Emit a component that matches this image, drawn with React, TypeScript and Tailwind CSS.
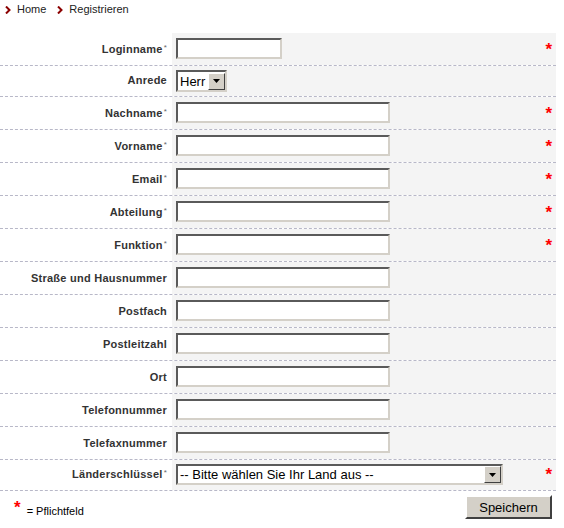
import React from "react";

type Row = {
  label: string;
  required?: boolean;
  kind: "text" | "short" | "anrede" | "land";
};

const rows: Row[] = [
  { label: "Loginname", required: true, kind: "short" },
  { label: "Anrede", kind: "anrede" },
  { label: "Nachname", required: true, kind: "text" },
  { label: "Vorname", required: true, kind: "text" },
  { label: "Email", required: true, kind: "text" },
  { label: "Abteilung", required: true, kind: "text" },
  { label: "Funktion", required: true, kind: "text" },
  { label: "Straße und Hausnummer", kind: "text" },
  { label: "Postfach", kind: "text" },
  { label: "Postleitzahl", kind: "text" },
  { label: "Ort", kind: "text" },
  { label: "Telefonnummer", kind: "text" },
  { label: "Telefaxnummer", kind: "text" },
  { label: "Länderschlüssel", required: true, kind: "land" },
];

function Chevron() {
  return (
    <svg width="6" height="8" viewBox="0 0 6 8" className="shrink-0">
      <path d="M1 0.5 L4.5 4 L1 7.5" fill="none" stroke="#8b0000" strokeWidth="2" />
    </svg>
  );
}

function DropButton() {
  return (
    <div className="w-[17px] h-[17px] bg-[#d4d0c8] border border-t-white border-l-white border-r-[#404040] border-b-[#404040] flex items-center justify-center">
      <svg width="7" height="4" viewBox="0 0 7 4">
        <path d="M0 0 H7 L3.5 4 Z" fill="#000" />
      </svg>
    </div>
  );
}

const inset =
  "bg-white border-2 border-t-[#5a5a5a] border-l-[#5a5a5a] border-b-[#d4d0c8] border-r-[#d4d0c8]";

function Field({ kind }: { kind: Row["kind"] }) {
  if (kind === "short") return <div className={`${inset} w-[106px] h-[21px]`} />;
  if (kind === "text") return <div className={`${inset} w-[214px] h-[21px]`} />;
  if (kind === "anrede")
    return (
      <div className={`${inset} w-[51px] h-[22px] flex items-center justify-between`}>
        <span className="pl-[2px] text-[13px] leading-none text-black">Herr</span>
        <DropButton />
      </div>
    );
  return (
    <div className={`${inset} w-[327px] h-[21px] flex items-center justify-between`}>
      <span className="pl-[2px] text-[13px] leading-none text-black">
        -- Bitte wählen Sie Ihr Land aus --
      </span>
      <DropButton />
    </div>
  );
}

function RedStar() {
  return <span className="block text-[17px] font-bold leading-none text-[#ff0000]">*</span>;
}

export default function App() {
  return (
    <div className="w-[564px] h-[528px] bg-white font-['Liberation_Sans',Arial,sans-serif] text-[#333]">
      {/* Breadcrumb */}
      <div className="h-[33px] pl-[5px] pt-[3px] flex items-start gap-[6px] text-[11px] leading-[13px] text-[#222]">
        <div className="flex items-center gap-[6px] h-[13px]">
          <Chevron />
          <span>Home</span>
        </div>
        <div className="flex items-center gap-[6px] h-[13px] ml-[5px]">
          <Chevron />
          <span>Registrieren</span>
        </div>
      </div>

      {/* Form */}
      <div className="w-[556px]">
        {rows.map((row) => {
          const short = row.kind === "anrede" || row.kind === "land";
          return (
            <div key={row.label} className="flex border-b border-dashed border-[#b8b8c8]">
              <div
                className={`w-[172px] shrink-0 text-right pr-[5px] text-[11px] font-bold leading-[13px] tracking-[0.25px] text-[#333] ${
                  short ? "pt-[8px]" : "pt-[10px]"
                }`}
              >
                {row.label}
                {row.required && (
                  <span className="relative -top-[3px] text-[8px] font-normal text-[#666] ml-[1px]">*</span>
                )}
              </div>
              <div
                className={`flex-1 bg-[#f4f4f4] pl-[4px] pr-[4px] flex items-start justify-between ${
                  short ? "h-[30px] pt-[4px]" : "h-[32px] pt-[5px]"
                }`}
              >
                <Field kind={row.kind} />
                {row.required && (
                  <div className={short ? "pt-[2px]" : "pt-[3px]"}>
                    <RedStar />
                  </div>
                )}
              </div>
            </div>
          );
        })}
      </div>

      {/* Footer */}
      <div className="w-[552px] flex items-start justify-between pt-[4px]">
        <div className="pl-[14px] pt-[4px] flex items-start gap-[6px]">
          <RedStar />
          <span className="text-[11px] leading-[13px] text-black pt-[6px]">= Pflichtfeld</span>
        </div>
        <button className="w-[87px] h-[24px] bg-[#d4d0c8] border-2 border-t-white border-l-white border-r-[#404040] border-b-[#404040] text-[13px] leading-none text-black">
          Speichern
        </button>
      </div>
    </div>
  );
}
